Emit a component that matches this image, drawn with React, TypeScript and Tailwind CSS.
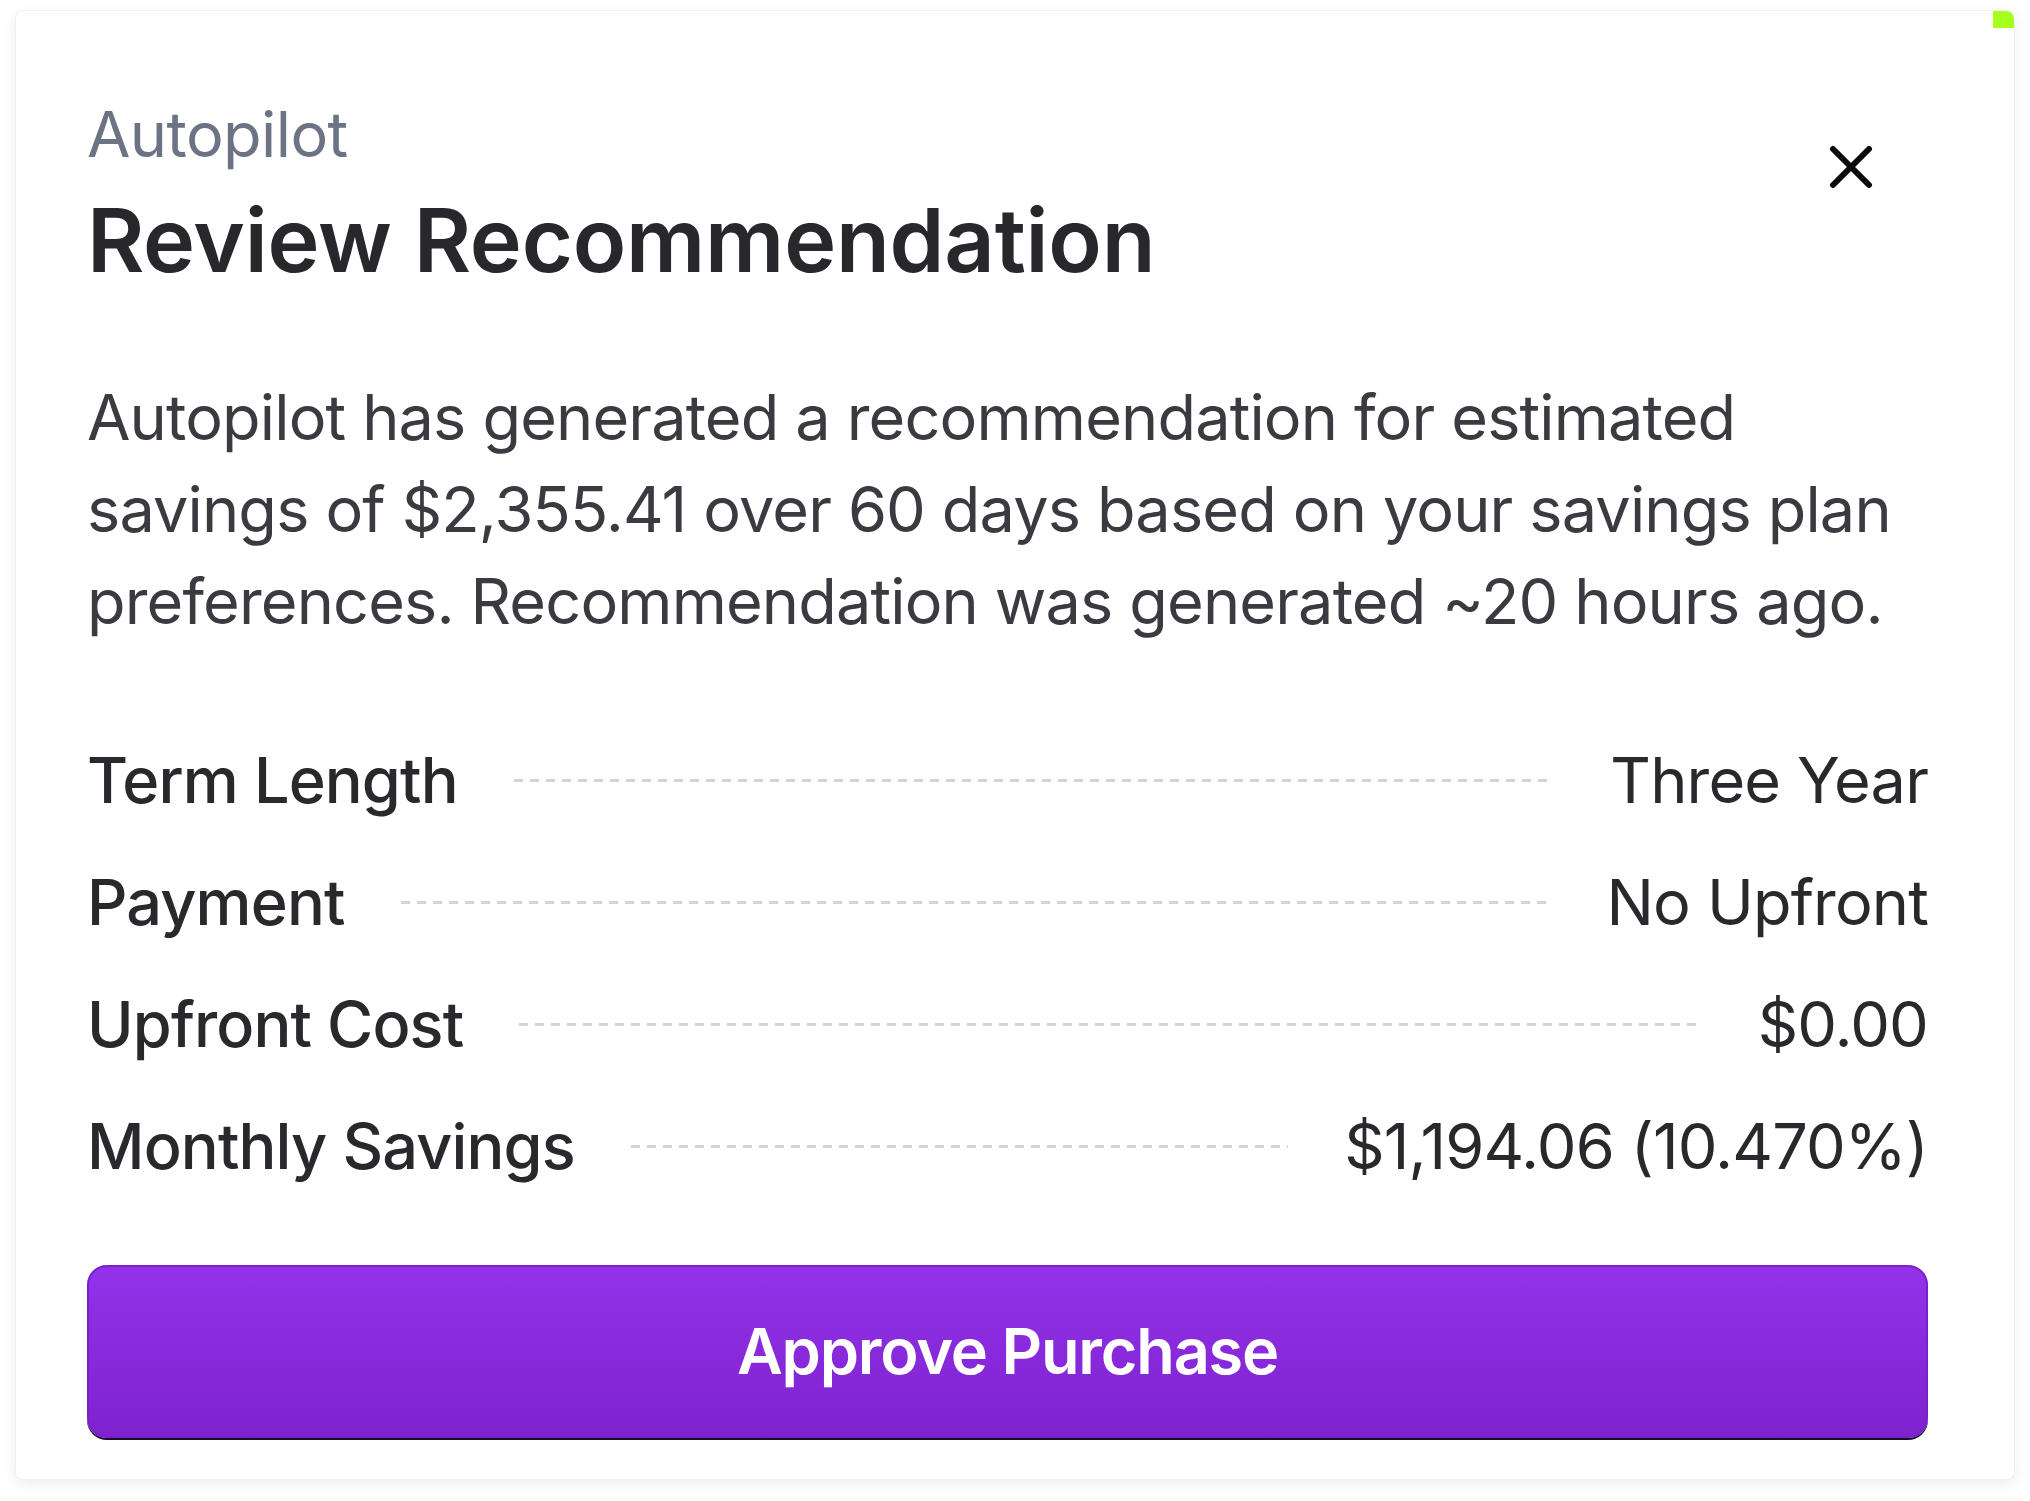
const rows = [
  { label: 'Term Length', value: 'Three Year' },
  { label: 'Payment', value: 'No Upfront' },
  { label: 'Upfront Cost', value: '$0.00' },
  { label: 'Monthly Savings', value: '$1,194.06 (10.470%)' },
];

function CloseIcon() {
  return (
    <svg width="44" height="44" viewBox="0 0 44 44" fill="none">
      <path d="M4 4L40 40M40 4L4 40" stroke="#0a0a0a" strokeWidth="6" strokeLinecap="round" />
    </svg>
  );
}

export default function App() {
  return (
    <div className="min-h-screen bg-white px-[15px] pt-[10px] pb-[21px] font-['Inter',sans-serif]">
      <div className="relative w-[2000px] h-[1470px] rounded-[8px] border border-[#f1f1f3] bg-white shadow-[0_4px_14px_rgba(0,0,0,0.07)] pt-[86px] pl-[71px] pr-[86px] pb-[40px] flex flex-col">
        <span className="absolute top-0 right-0 h-[17px] w-[21px] rounded-tr-[8px] bg-[#a6ff1c]" />

        <div className="flex items-start justify-between">
          <div className="flex flex-col">
            <span className="text-[63px] leading-[74px] tracking-[-0.6px] text-[#6b7384]">Autopilot</span>
            <h1 className="mt-[16px] text-[88px] leading-[106px] font-semibold tracking-[-0.2px] text-[#27272c]">
              Review Recommendation
            </h1>
          </div>
          <button className="mt-[48px] mr-[55px]">
            <CloseIcon />
          </button>
        </div>

        <p className="mt-[78px] text-[63px] leading-[92px] tracking-[-0.85px] text-[#3a3a40]">
          Autopilot has generated a recommendation for estimated savings of $2,355.41 over 60 days based on your
          savings plan preferences. Recommendation was generated ~20 hours ago.
        </p>

        <div className="mt-[95px] flex flex-col gap-[46px]">
          {rows.map(r => (
            <div key={r.label} className="flex items-center text-[63px] leading-[76px] tracking-[-0.85px]">
              <span className="font-medium text-[#28282d]">{r.label}</span>
              <div className="mx-[56px] h-[3px] flex-1 bg-[repeating-linear-gradient(to_right,#d2d4dc_0_9px,transparent_9px_16px)]" />
              <span className="text-[#28282d]">{r.value}</span>
            </div>
          ))}
        </div>

        <button className="mt-[81px] h-[173px] w-full shrink-0 rounded-[20px] border-2 border-[#7a1fcc] bg-linear-to-b from-[#9332ea] to-[#7e22ce] shadow-[0_2px_0_#1a0a2e] text-[63px] font-semibold tracking-[-1.2px] text-white">
          Approve Purchase
        </button>
      </div>
    </div>
  );
}
